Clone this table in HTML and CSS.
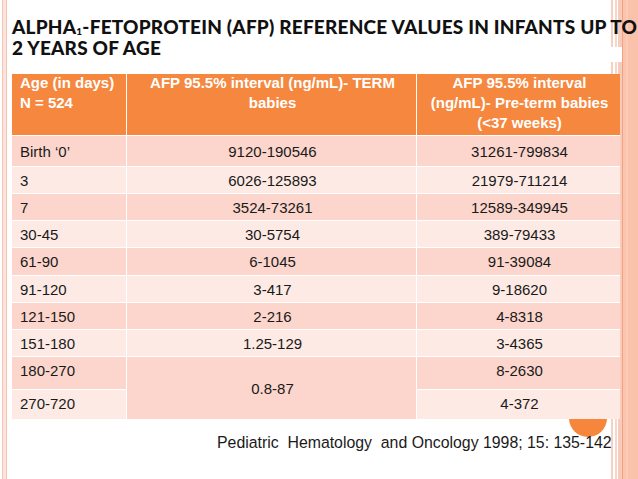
FILE: index.html
```html
<!DOCTYPE html>
<html>
<head>
<meta charset="utf-8">
<link rel="stylesheet" href="styles.css">
</head>
<body>
<div class="deco-left"></div>
<div class="deco-stripes"></div>
<div class="deco-gap"></div>
<div class="deco-band"></div>
<div class="deco-dot"></div>
<main class="slide">
  <h1 class="title">ALPHA<sub>1</sub>-FETOPROTEIN (AFP) REFERENCE VALUES IN INFANTS UP TO<br>2 YEARS OF AGE</h1>
  <table class="afp">
    <colgroup><col class="c1"><col class="c2"><col class="c3"></colgroup>
    <tr class="head">
      <th class="left"><div class="hd">Age (in days)<br>N = 524</div></th>
      <th><div class="hd">AFP 95.5% interval (ng/mL)- TERM<br>babies</div></th>
      <th><div class="hd">AFP 95.5% interval<br>(ng/mL)- Pre-term babies<br>(&lt;37 weeks)</div></th>
    </tr>
    <tr class="dark h31"><td class="left">Birth ‘0’</td><td>9120-190546</td><td>31261-799834</td></tr>
    <tr class="light h27"><td class="left">3</td><td>6026-125893</td><td>21979-711214</td></tr>
    <tr class="dark h27"><td class="left">7</td><td>3524-73261</td><td>12589-349945</td></tr>
    <tr class="light h27"><td class="left">30-45</td><td>30-5754</td><td>389-79433</td></tr>
    <tr class="dark h28"><td class="left">61-90</td><td>6-1045</td><td>91-39084</td></tr>
    <tr class="light h27"><td class="left">91-120</td><td>3-417</td><td>9-18620</td></tr>
    <tr class="dark h27"><td class="left">121-150</td><td>2-216</td><td>4-8318</td></tr>
    <tr class="light h27"><td class="left">151-180</td><td>1.25-129</td><td>3-4365</td></tr>
    <tr class="dark h33 top"><td class="left">180-270</td><td rowspan="2" class="merged">0.8-87</td><td>8-2630</td></tr>
    <tr class="light h29 last"><td class="left">270-720</td><td>4-372</td></tr>
  </table>
  <p class="cite">Pediatric&nbsp; Hematology&nbsp; and Oncology 1998; 15: 135-142</p>
</main>
</body>
</html>
```

FILE: styles.css
```css
html, body {
  margin: 0;
  padding: 0;
  background: #ffffff;
}
body {
  width: 638px;
  height: 479px;
  overflow: hidden;
  position: relative;
  font-family: "Liberation Sans", Arial, sans-serif;
  color: #1a1a1a;
}
.slide {
  position: relative;
  z-index: 1;
  padding: 16px 18px 0 12px;
}
.title {
  margin: 0;
  font-family: "Lato", "Open Sans", sans-serif;
  font-weight: 900;
  font-size: 19px;
  line-height: 21px;
  letter-spacing: 0.22px;
  color: #111111;
  white-space: nowrap;
}
.title sub {
  font-size: 10px;
  vertical-align: -1px;
  line-height: 0;
}
.afp {
  margin-top: 16px;
  width: 608px;
  border-collapse: separate;
  border-spacing: 0;
  table-layout: fixed;
  font-size: 15px;
}
.c1 { width: 115px; }
.c2 { width: 290px; }
.c3 { width: 203px; }
.afp th, .afp td {
  box-sizing: border-box;
  border: 0;
  border-right: 1px solid #ffffff;
  border-bottom: 1px solid #ffffff;
  padding: 0 6px 0 8px;
  text-align: center;
  vertical-align: middle;
  line-height: 17px;
}
.afp tr > :last-child { border-right: 0; }
.afp .left { text-align: left; }
.head th {
  background: #f5873e;
  color: #ffffff;
  font-weight: 700;
  height: 62px;
  vertical-align: top;
}
.hd {
  line-height: 20px;
  margin-top: -1px;
}
.dark td { background: #fcd6cc; }
.light td { background: #fdeae4; }
.afp td.merged { background: #fcd6cc; border-bottom: 0; }
.h31 td { height: 31px; }
.h27 td { height: 27px; }
.h28 td { height: 28px; }
.h33 td { height: 33px; }
.h29 td { height: 29px; border-bottom: 0; }
.top td { vertical-align: top; padding-top: 5px; }
.top td.merged { vertical-align: middle; padding-top: 0; }
.last td { padding-bottom: 3px; }
.cite {
  margin: 15px 0 0 0;
  padding-left: 205px;
  font-size: 15.85px;
  line-height: 18px;
  white-space: nowrap;
}
.deco-left {
  position: absolute;
  left: 2px;
  top: 0;
  bottom: 0;
  width: 3px;
  background: #fbe4dc;
  border-left: 1px solid #f3c3b3;
  border-right: 1px solid #f3c3b3;
}
.deco-stripes {
  position: absolute;
  left: 610px;
  top: 0;
  bottom: 0;
  width: 12px;
  background: linear-gradient(to right,
    #fff 0, #fff 1px,
    #f8d0c2 1px, #f8d0c2 3px,
    #fff 3px, #fff 5px,
    #f9d6ca 5px, #f9d6ca 7px,
    #fff 7px, #fff 8px,
    #f8cbbb 8px, #f8cbbb 12px);
}
.deco-gap {
  position: absolute;
  left: 606px;
  top: 47px;
  width: 16px;
  height: 15px;
  background: #ffffff;
}
.deco-band {
  position: absolute;
  left: 622px;
  top: 0;
  bottom: 0;
  width: 16px;
  background: linear-gradient(to right,
    #f0a283 0, #f0a283 1px,
    #fbc4ae 1px, #fbc4ae 4px,
    #fccab5 4px, #fccab5 6px,
    #fbc2ab 6px);
}
.deco-dot {
  position: absolute;
  left: 569px;
  top: 399px;
  width: 38px;
  height: 38px;
  border-radius: 50%;
  background: #f5863b;
}
```
